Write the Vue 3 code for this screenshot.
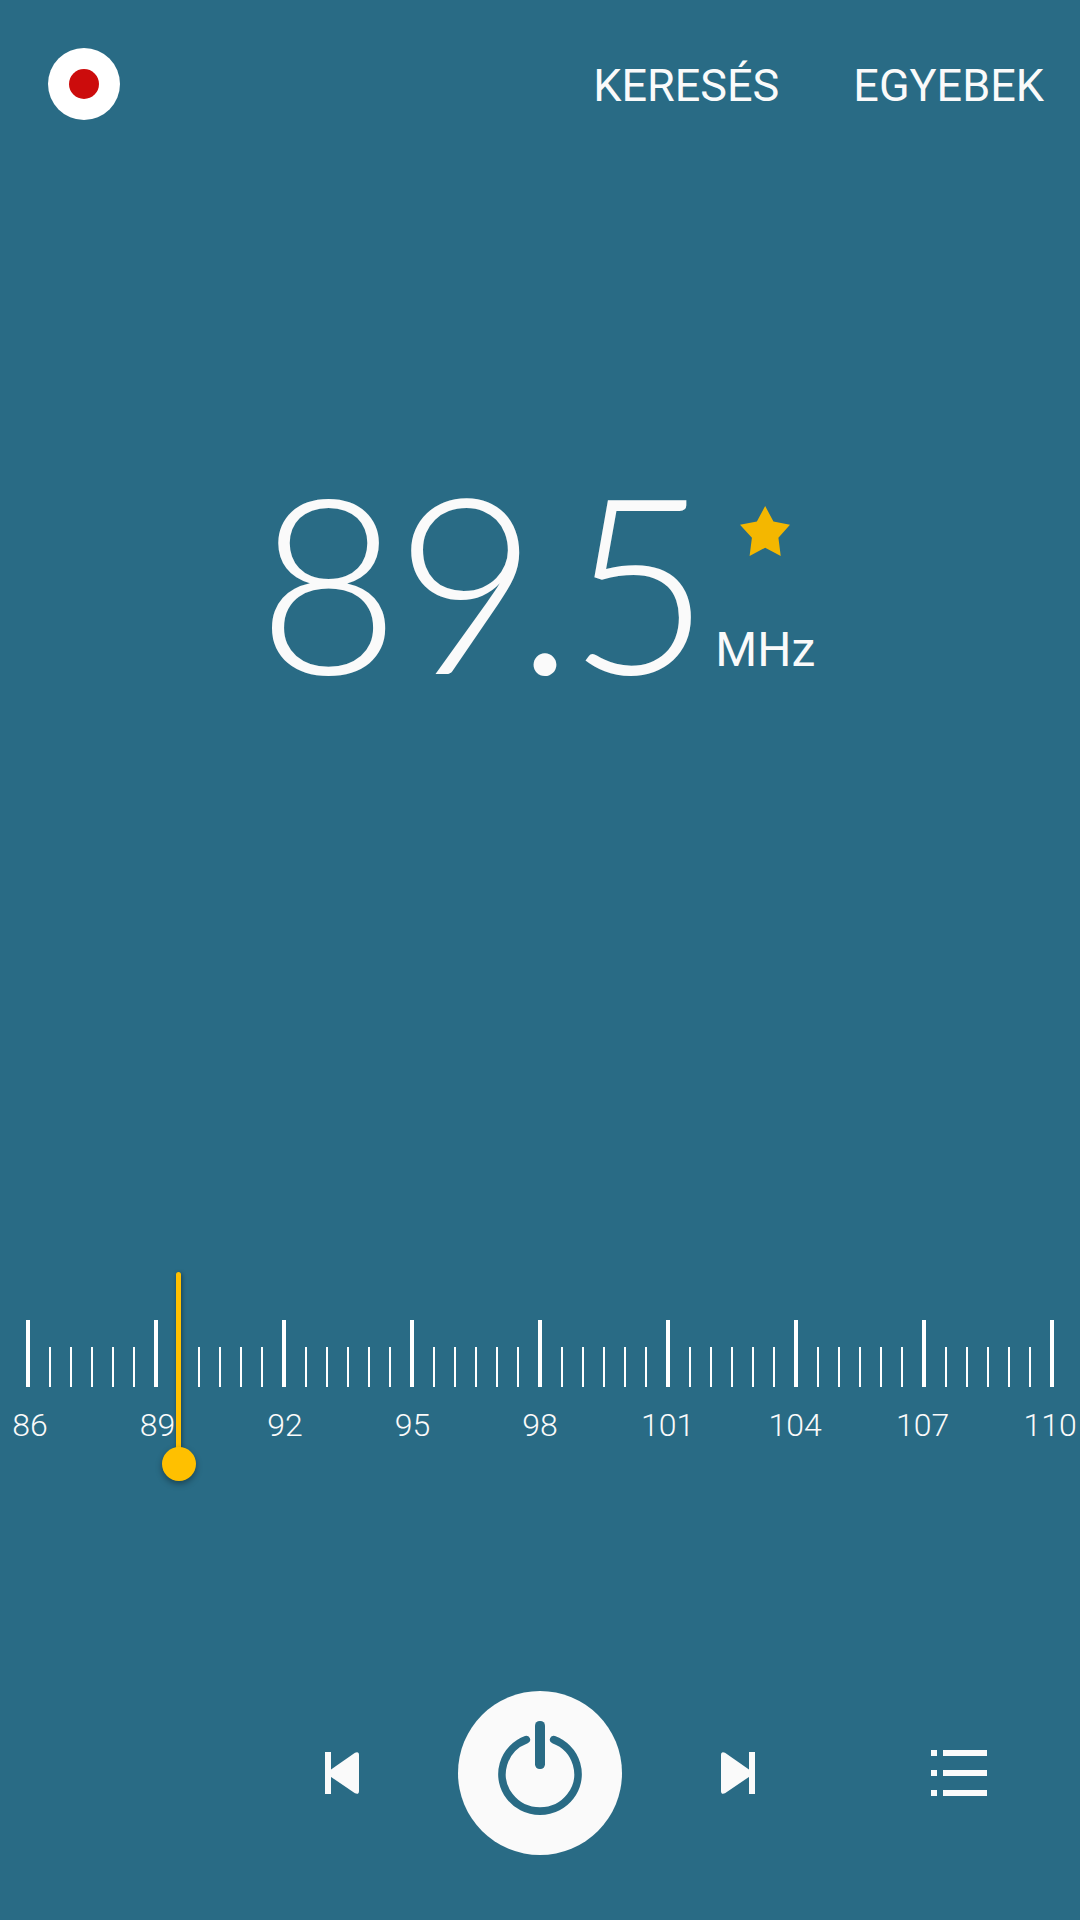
<script setup>
import { ref, computed } from 'vue';

const min = 86;
const max = 110;

const frequency = ref(89.5);
const powered = ref(true);
const favorite = ref(true);

// One tick per half MHz, a tall one every 3 MHz
const ticks = Array.from({ length: (max - min) * 2 + 1 }, (_, i) => ({
  value: min + i / 2,
  major: i % 6 === 0,
}));
const labels = ticks.filter((tick) => tick.major).map((tick) => tick.value);

const display = computed(() => frequency.value.toFixed(1));
const needleLeft = computed(() => `${((frequency.value - min) / (max - min)) * 100}%`);

function step(amount) {
  frequency.value = Math.min(max, Math.max(min, frequency.value + amount));
}
</script>

<template>
  <main class="radio">
    <header class="top-bar">
      <button class="record" aria-label="Felvétel"><span class="record-dot"></span></button>
      <nav class="menu">
        <button class="menu-item">KERESÉS</button>
        <button class="menu-item">EGYEBEK</button>
      </nav>
    </header>

    <section class="station">
      <output class="frequency">{{ display }}</output>
      <div class="station-side">
        <button class="favorite" :aria-pressed="favorite" aria-label="Kedvenc" @click="favorite = !favorite">
          <svg viewBox="0 0 151 151">
            <polygon points="76,0 101,47 151,57 116,96 123,151 76,126 29,151 36,96 0,57 51,47" />
          </svg>
        </button>
        <span class="unit">MHz</span>
      </div>
    </section>

    <section class="dial">
      <div class="ticks">
        <span v-for="tick in ticks" :key="tick.value" class="tick" :class="{ major: tick.major }"></span>
      </div>
      <div class="labels">
        <span v-for="label in labels" :key="label" class="label">{{ label }}</span>
      </div>
      <div class="needle-lane">
        <span class="needle" :style="{ left: needleLeft }"></span>
      </div>
      <input
        v-model.number="frequency"
        class="tuner"
        type="range"
        :min="min"
        :max="max"
        step="0.1"
        aria-label="Frekvencia"
      />
    </section>

    <footer class="controls">
      <button class="control previous" aria-label="Előző" @click="step(-0.1)">
        <svg class="skip-icon" viewBox="0 0 102 126">
          <rect width="18" height="126" />
          <path d="M17 53 L90 2 Q102 -3 102 9 V117 Q102 129 90 124 L17 74 Z" />
        </svg>
      </button>
      <button class="power" :aria-pressed="powered" aria-label="Be/Ki" @click="powered = !powered">
        <svg class="power-icon" viewBox="0 0 492 492">
          <path d="M205 146 A114 111 0 1 0 287 146" />
          <rect x="231" y="90" width="30" height="144" rx="14" />
        </svg>
      </button>
      <button class="control" aria-label="Következő" @click="step(0.1)">
        <svg class="skip-icon" viewBox="0 0 102 126">
          <rect x="84" width="18" height="126" />
          <path d="M85 53 L12 2 Q0 -3 0 9 V117 Q0 129 12 124 L85 74 Z" />
        </svg>
      </button>
      <button class="control" aria-label="Állomások">
        <svg class="list-icon" viewBox="0 0 168 138">
          <path d="M0 0h18v18H0z M36 0h132v18H36z M0 60h18v18H0z M36 60h132v18H36z M0 120h18v18H0z M36 120h132v18H36z" />
        </svg>
      </button>
    </footer>
  </main>
</template>

<style>
body {
  margin: 0;
  background: #296b85;
}
</style>

<style scoped>
.radio {
  display: flex;
  flex-direction: column;
  box-sizing: border-box;
  min-height: 100vh;
  background: #296b85;
  color: #fafafa;
  font-family: Roboto, sans-serif;
}

button {
  padding: 0;
  border: none;
  background: none;
  color: inherit;
  font: inherit;
  cursor: pointer;
}

svg {
  display: block;
}

.top-bar {
  display: flex;
  align-items: flex-start;
  justify-content: space-between;
  padding: 48px 36px 0 48px;
}

.record {
  display: flex;
  align-items: center;
  justify-content: center;
  width: 72px;
  height: 72px;
  border-radius: 50%;
  background: #fff;
}

.record-dot {
  width: 30px;
  height: 30px;
  border-radius: 50%;
  background: #cc0c0c;
}

.menu {
  display: flex;
  gap: 74px;
}

.menu-item {
  font-size: 45px;
  line-height: 76px;
}

.station {
  display: flex;
  justify-content: center;
  gap: 10px;
  margin-top: 374px;
  padding-right: 8px;
}

.frequency {
  font-family: Lato, sans-serif;
  font-size: 246px;
  font-weight: 300;
  font-variant-numeric: proportional-nums;
  line-height: 162px;
}

.station-side {
  display: flex;
  flex-direction: column;
  align-items: center;
  gap: 70px;
  padding: 8px 0 4px;
}

.favorite {
  width: 50px;
  height: 50px;
  fill: #f4b700;
}

.unit {
  font-size: 48px;
  line-height: 48px;
}

.dial {
  position: relative;
  margin-top: 594px;
  padding-top: 48px;
}

.ticks {
  display: flex;
  align-items: flex-end;
  justify-content: space-between;
  padding: 0 26px;
}

.tick {
  width: 2px;
  height: 40px;
  background: #fff;
}

.tick.major {
  width: 4px;
  height: 67px;
}

.labels {
  display: flex;
  justify-content: space-between;
  padding: 18px 30px 36px;
}

.label {
  display: flex;
  justify-content: center;
  width: 0;
  font-size: 32px;
  font-weight: 300;
  line-height: 40px;
}

/* Needle and knob lie over the scale */
.needle-lane {
  position: absolute;
  top: 0;
  bottom: 17px;
  left: 28px;
  right: 28px;
}

.needle {
  position: absolute;
  top: 0;
  bottom: 0;
  width: 5px;
  margin-left: -1px;
  border-radius: 3px;
  background: #ffc000;
  box-shadow: 1px 1px 4px rgba(0, 0, 0, 0.4);
}

.tuner {
  position: absolute;
  bottom: 0;
  left: 13px;
  width: calc(100% - 24px);
  height: 34px;
  margin: 0;
  appearance: none;
  background: transparent;
  cursor: pointer;
}

.tuner::-webkit-slider-thumb {
  appearance: none;
  width: 34px;
  height: 34px;
  border-radius: 50%;
  background: #ffc000;
  box-shadow: 0 3px 6px rgba(0, 0, 0, 0.35);
}

.controls {
  display: grid;
  grid-template-columns: 1fr 198px 198px 198px 1fr;
  align-items: center;
  justify-items: center;
  margin-top: auto;
  padding: 48px 0 65px;
}

.control {
  padding: 24px;
  fill: #fafafa;
}

.previous {
  grid-column: 2;
}

.skip-icon {
  width: 34px;
  height: 42px;
}

.list-icon {
  width: 56px;
  height: 46px;
}

.power {
  width: 164px;
  height: 164px;
  border-radius: 50%;
  background: #fafafa;
}

.power-icon {
  width: 100%;
  fill: #296b85;
}

.power-icon path {
  fill: none;
  stroke: #296b85;
  stroke-width: 23;
  stroke-linecap: round;
}
</style>
